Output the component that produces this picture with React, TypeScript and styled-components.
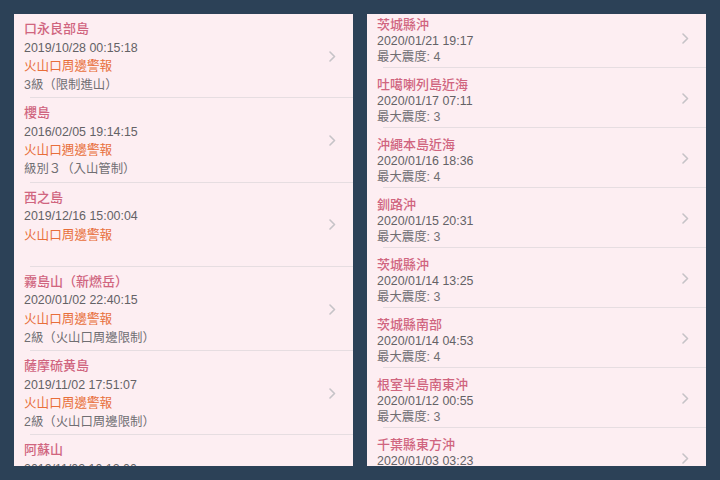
import React from "react";
import styled, { createGlobalStyle } from "styled-components";

const Global = createGlobalStyle`
  html, body { margin: 0; padding: 0; background: #2c4157; }
  body { font-family: "Liberation Sans", "Noto Sans CJK TC", sans-serif; }
  * { box-sizing: border-box; }
`;

const Page = styled.div`
  width: 720px;
  height: 480px;
  padding: 14px;
  display: flex;
  gap: 14px;
  background: #2c4157;
`;

const Panel = styled.div`
  width: 339px;
  height: 452px;
  background: #fdeef2;
  overflow: hidden;
`;

const List = styled.div<{ $offset: number }>`
  display: flex;
  flex-direction: column;
  margin-top: ${(p) => p.$offset}px;
`;

const Row = styled.div<{ $h: number }>`
  position: relative;
  flex: 0 0 auto;
  height: ${(p) => p.$h}px;
  display: flex;
  align-items: center;
  padding: 0 17px 0 10px;
  &::after {
    content: "";
    position: absolute;
    left: 16px;
    right: 0;
    bottom: 0;
    height: 1px;
    background: #e6dde1;
  }
`;

const Content = styled.div<{ $pt: number; $lh: number }>`
  flex: 1;
  align-self: stretch;
  padding-top: ${(p) => p.$pt}px;
  display: flex;
  flex-direction: column;
  line-height: ${(p) => p.$lh}px;
`;

const Title = styled.div`
  color: #d0657f;
  font-size: 13px;
  font-weight: 500;
  white-space: nowrap;
`;

const DateLine = styled.div`
  color: #646266;
  font-size: 12.4px;
  white-space: nowrap;
`;

const Alert = styled.div`
  color: #e86e3a;
  font-size: 12.6px;
  white-space: nowrap;
`;

const Level = styled.div`
  color: #706e72;
  font-size: 12.4px;
  white-space: nowrap;
`;

const Chevron = () => (
  <svg width="7" height="11" viewBox="0 0 7 11" style={{ flex: "0 0 auto" }}>
    <polyline
      points="1,1 5.5,5.5 1,10"
      fill="none"
      stroke="#c6c3c7"
      strokeWidth="1.6"
      strokeLinecap="round"
      strokeLinejoin="round"
    />
  </svg>
);

const volcanoes = [
  { name: "口永良部島", date: "2019/10/28 00:15:18", alert: "火山口周邊警報", level: "3級（限制進山）" },
  { name: "櫻島", date: "2016/02/05 19:14:15", alert: "火山口週邊警報", level: "級別３（入山管制）" },
  { name: "西之島", date: "2019/12/16 15:00:04", alert: "火山口周邊警報", level: "" },
  { name: "霧島山（新燃岳）", date: "2020/01/02 22:40:15", alert: "火山口周邊警報", level: "2級（火山口周邊限制）" },
  { name: "薩摩硫黄島", date: "2019/11/02 17:51:07", alert: "火山口周邊警報", level: "2級（火山口周邊限制）" },
  { name: "阿蘇山", date: "2019/11/02 10:12:00", alert: "火山口周邊警報", level: "2級（火山口周邊限制）" },
];

const quakes = [
  { name: "茨城縣沖", date: "2020/01/21 19:17", level: "最大震度: 4" },
  { name: "吐噶喇列島近海", date: "2020/01/17 07:11", level: "最大震度: 3" },
  { name: "沖繩本島近海", date: "2020/01/16 18:36", level: "最大震度: 4" },
  { name: "釧路沖", date: "2020/01/15 20:31", level: "最大震度: 3" },
  { name: "茨城縣沖", date: "2020/01/14 13:25", level: "最大震度: 3" },
  { name: "茨城縣南部", date: "2020/01/14 04:53", level: "最大震度: 4" },
  { name: "根室半島南東沖", date: "2020/01/12 00:55", level: "最大震度: 3" },
  { name: "千葉縣東方沖", date: "2020/01/03 03:23", level: "最大震度: 3" },
];

export default function App() {
  return (
    <>
      <Global />
      <Page>
        <Panel>
          <List $offset={0}>
            {volcanoes.map((v, i) => (
              <Row key={i} $h={84.3}>
                <Content $pt={6} $lh={18.6}>
                  <Title>{v.name}</Title>
                  <DateLine>{v.date}</DateLine>
                  <Alert>{v.alert}</Alert>
                  {v.level && <Level>{v.level}</Level>}
                </Content>
                <Chevron />
              </Row>
            ))}
          </List>
        </Panel>
        <Panel>
          <List $offset={-5.7}>
            {quakes.map((q, i) => (
              <Row key={i} $h={60}>
                <Content $pt={8.5} $lh={16}>
                  <Title>{q.name}</Title>
                  <DateLine>{q.date}</DateLine>
                  <Level>{q.level}</Level>
                </Content>
                <Chevron />
              </Row>
            ))}
          </List>
        </Panel>
      </Page>
    </>
  );
}
